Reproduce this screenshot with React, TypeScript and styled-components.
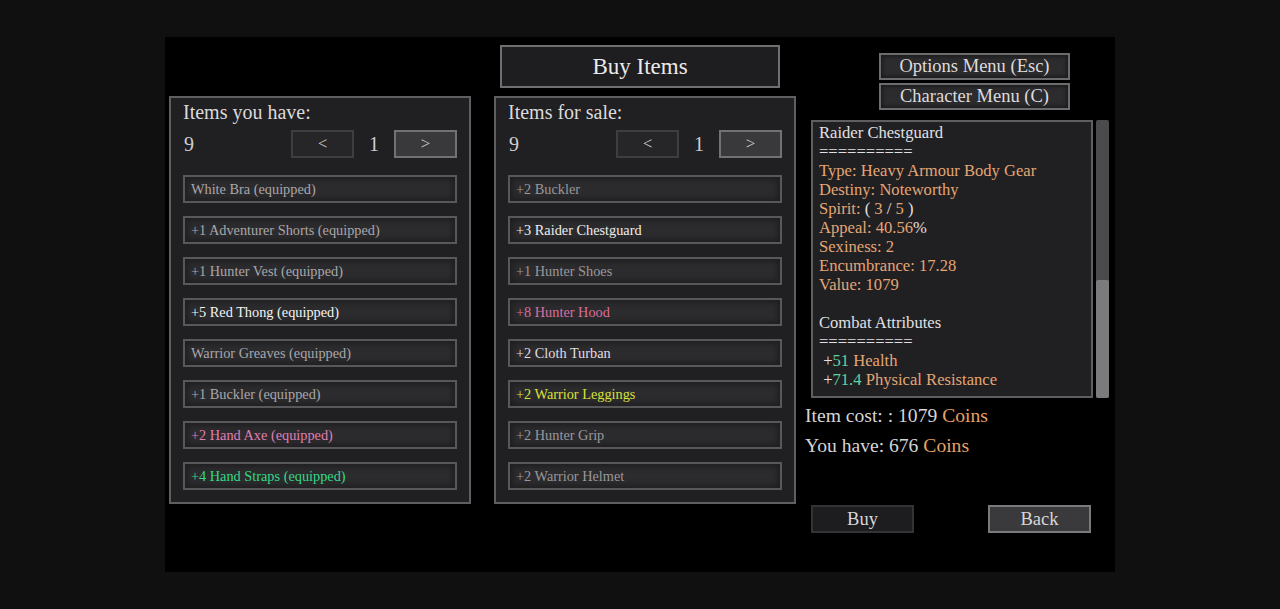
import styled, { createGlobalStyle } from 'styled-components';

const GlobalStyle = createGlobalStyle`
  html, body {
    margin: 0;
    padding: 0;
    background: #101010;
    height: 100%;
  }
  body {
    font-family: "Liberation Serif", "DejaVu Serif", serif;
    color: #d8d6d8;
  }
`;

const Screen = styled.div`
  width: 1280px;
  height: 609px;
  padding-top: 37px;
  box-sizing: border-box;
  background: #101010;
`;

const Game = styled.div`
  width: 950px;
  height: 535px;
  margin: 0 auto;
  background: #000;
  display: flex;
  align-items: flex-start;
  padding-left: 4px;
  box-sizing: border-box;
`;

const Column = styled.div<{ $top?: number; $width: number; $ml?: number }>`
  display: flex;
  flex-direction: column;
  width: ${p => p.$width}px;
  margin-top: ${p => p.$top ?? 0}px;
  margin-left: ${p => p.$ml ?? 0}px;
`;

const TitleBox = styled.div`
  width: 280px;
  height: 43px;
  margin-left: 6px;
  box-sizing: border-box;
  border: 2px solid #6f6e70;
  background: #1e1d1f;
  display: flex;
  align-items: center;
  justify-content: center;
  font-size: 23px;
  color: #ecebec;
  margin-bottom: 8px;
`;

const Panel = styled.div`
  width: 302px;
  height: 408px;
  box-sizing: border-box;
  border: 2px solid #5f5e60;
  background: #201f21;
  padding: 2px 12px 0 12px;
`;

const PanelHeading = styled.div`
  font-size: 20px;
  color: #dcdadc;
  height: 24px;
  line-height: 24px;
`;

const PagerRow = styled.div`
  display: flex;
  align-items: center;
  height: 28px;
  margin-top: 6px;
  margin-bottom: 17px;
  font-size: 20px;
  color: #cfcdcf;
`;

const Count = styled.span`
  flex: 1;
  padding-left: 1px;
`;

const PageNum = styled.span`
  width: 40px;
  text-align: center;
`;

const PageButton = styled.div<{ $active?: boolean }>`
  width: 63px;
  height: 28px;
  box-sizing: border-box;
  border: 2px solid ${p => (p.$active ? '#727173' : '#3e3d3f')};
  background: ${p => (p.$active ? '#39383a' : '#262527')};
  display: flex;
  align-items: center;
  justify-content: center;
  font-size: 17px;
  color: #c8c6c8;
`;

const ItemList = styled.div`
  display: flex;
  flex-direction: column;
  gap: 13px;
`;

const ItemRow = styled.div<{ $color: string }>`
  height: 28px;
  box-sizing: border-box;
  border: 2px solid #58575a;
  background: #2c2b2e;
  box-shadow: inset 0 0 6px 2px #1d1c1e;
  display: flex;
  align-items: center;
  padding-left: 6px;
  font-size: 14.3px;
  color: ${p => p.$color};
  white-space: nowrap;
`;

const MenuButton = styled.div`
  width: 191px;
  height: 27px;
  margin-left: 74px;
  box-sizing: border-box;
  border: 2px solid #6c6b6d;
  background: #2c2b2d;
  box-shadow: inset 0 0 4px 1px #161517;
  display: flex;
  align-items: center;
  justify-content: center;
  font-size: 18.5px;
  color: #dddbdd;
  & + & {
    margin-top: 3px;
  }
`;

const InfoRow = styled.div`
  display: flex;
  gap: 3px;
  margin-top: 10px;
  margin-left: 6px;
  height: 278px;
`;

const InfoBox = styled.div`
  width: 282px;
  box-sizing: border-box;
  border: 2px solid #5f5e60;
  background: #201f21;
  padding: 1px 6px 0 6px;
  font-size: 16.6px;
  line-height: 19px;
  overflow: hidden;
`;

const Line = styled.div<{ $color?: string }>`
  color: ${p => p.$color ?? '#e2e0e2'};
  white-space: pre;
  min-height: 19px;
`;

const Orange = styled.span`
  color: #e3a676;
`;

const Green = styled.span`
  color: #5fd3a2;
`;

const Light = styled.span`
  color: #e2e0e2;
`;

const Scrollbar = styled.div`
  width: 13px;
  border-radius: 2px;
  background: #4b4a4c;
  display: flex;
  flex-direction: column;
  justify-content: flex-end;
`;

const Thumb = styled.div`
  height: 118px;
  border-radius: 2px;
  background: #7b7a7c;
`;

const CostBlock = styled.div`
  margin-top: 3px;
`;

const CostLine = styled.div`
  font-size: 19.6px;
  color: #d6d4d6;
  height: 30px;
  line-height: 30px;
`;

const Coins = styled.span`
  color: #e6a064;
`;

const ButtonRow = styled.div`
  display: flex;
  justify-content: space-between;
  margin-left: 6px;
  width: 280px;
  margin-top: 44px;
`;

const ActionButton = styled.div<{ $active?: boolean }>`
  width: 103px;
  height: 28px;
  box-sizing: border-box;
  border: 2px solid ${p => (p.$active ? '#7a797b' : '#333234')};
  background: ${p => (p.$active ? '#3a393b' : '#1d1c1e')};
  display: flex;
  align-items: center;
  justify-content: center;
  font-size: 18.5px;
  color: #d8d6d8;
`;

const owned = [
  { name: 'White Bra (equipped)', color: '#a9a7aa' },
  { name: '+1 Adventurer Shorts (equipped)', color: '#a9a7aa' },
  { name: '+1 Hunter Vest (equipped)', color: '#a9a7aa' },
  { name: '+5 Red Thong (equipped)', color: '#f4f4f4' },
  { name: 'Warrior Greaves (equipped)', color: '#a9a7aa' },
  { name: '+1 Buckler (equipped)', color: '#a9a7aa' },
  { name: '+2 Hand Axe (equipped)', color: '#e07fb2' },
  { name: '+4 Hand Straps (equipped)', color: '#33d987' },
];

const forSale = [
  { name: '+2 Buckler', color: '#9a989b' },
  { name: '+3 Raider Chestguard', color: '#eeeeee' },
  { name: '+1 Hunter Shoes', color: '#9a989b' },
  { name: '+8 Hunter Hood', color: '#da6f9c' },
  { name: '+2 Cloth Turban', color: '#e0dee0' },
  { name: '+2 Warrior Leggings', color: '#d9e038' },
  { name: '+2 Hunter Grip', color: '#9a989b' },
  { name: '+2 Warrior Helmet', color: '#9a989b' },
];

type Item = { name: string; color: string };

const ItemPanel = ({ title, items }: { title: string; items: Item[] }) => (
  <Panel>
    <PanelHeading>{title}</PanelHeading>
    <PagerRow>
      <Count>9</Count>
      <PageButton>&lt;</PageButton>
      <PageNum>1</PageNum>
      <PageButton $active>&gt;</PageButton>
    </PagerRow>
    <ItemList>
      {items.map(it => (
        <ItemRow key={it.name} $color={it.color}>
          {it.name}
        </ItemRow>
      ))}
    </ItemList>
  </Panel>
);

export default function App() {
  return (
    <>
      <GlobalStyle />
      <Screen>
        <Game>
          <Column $width={302} $top={59}>
            <ItemPanel title="Items you have:" items={owned} />
          </Column>
          <Column $width={302} $top={8} $ml={23}>
            <TitleBox>Buy Items</TitleBox>
            <ItemPanel title="Items for sale:" items={forSale} />
          </Column>
          <Column $width={305} $top={16} $ml={9}>
            <MenuButton>Options Menu (Esc)</MenuButton>
            <MenuButton>Character Menu (C)</MenuButton>
            <InfoRow>
              <InfoBox>
                <Line>Raider Chestguard</Line>
                <Line>==========</Line>
                <Line $color="#e3a676">Type: Heavy Armour Body Gear</Line>
                <Line $color="#e3a676">Destiny: Noteworthy</Line>
                <Line $color="#e3a676">
                  Spirit: <Light>(</Light> 3 <Light>/</Light> 5 <Light>)</Light>
                </Line>
                <Line $color="#e3a676">
                  Appeal: 40.56<Light>%</Light>
                </Line>
                <Line $color="#e3a676">Sexiness: 2</Line>
                <Line $color="#e3a676">Encumbrance: 17.28</Line>
                <Line $color="#e3a676">Value: 1079</Line>
                <Line> </Line>
                <Line>Combat Attributes</Line>
                <Line>==========</Line>
                <Line>
                  {' +'}
                  <Green>51</Green> <Orange>Health</Orange>
                </Line>
                <Line>
                  {' +'}
                  <Green>71.4</Green> <Orange>Physical Resistance</Orange>
                </Line>
              </InfoBox>
              <Scrollbar>
                <Thumb />
              </Scrollbar>
            </InfoRow>
            <CostBlock>
              <CostLine>
                Item cost: : 1079 <Coins>Coins</Coins>
              </CostLine>
              <CostLine>
                You have: 676 <Coins>Coins</Coins>
              </CostLine>
            </CostBlock>
            <ButtonRow>
              <ActionButton>Buy</ActionButton>
              <ActionButton $active>Back</ActionButton>
            </ButtonRow>
          </Column>
        </Game>
      </Screen>
    </>
  );
}
